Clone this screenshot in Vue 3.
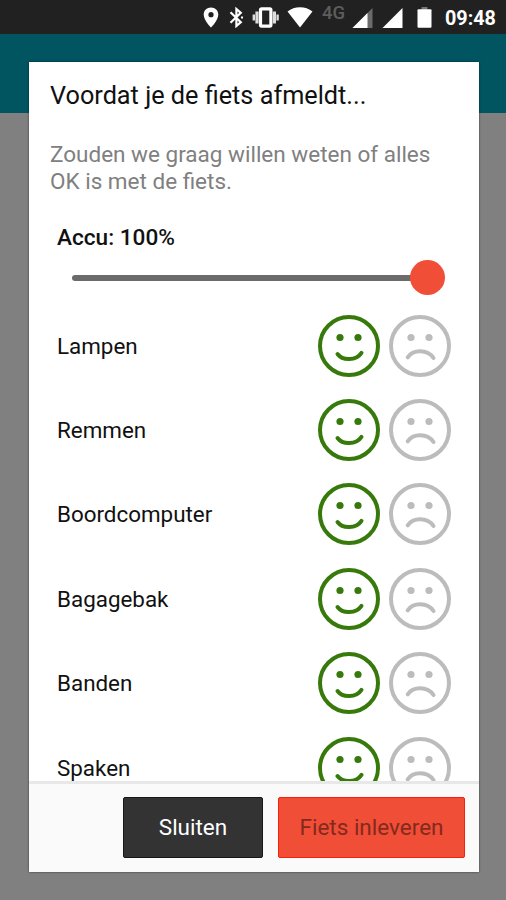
<template>
  <div class="screen">
    <div class="statusbar">
      <svg class="icon-pin" width="16" height="21" viewBox="0 0 16 21">
        <path fill="#fff" fill-rule="evenodd" d="M8 0.5C3.8 0.5 0.7 3.6 0.7 7.7C0.7 13 8 20.5 8 20.5S15.3 13 15.3 7.7C15.3 3.6 12.2 0.5 8 0.5ZM8 5.1A2.6 2.6 0 1 1 8 10.3A2.6 2.6 0 1 1 8 5.1Z" />
      </svg>
      <svg class="icon-bluetooth" width="15" height="21" viewBox="0 0 15 21">
        <path d="M1.5 5.3L11.8 15.2L7.4 19V2L11.8 5.8L1.5 15.7" fill="none" stroke="#fff" stroke-width="2.2" />
        <path d="M12 10.5H14" stroke="#fff" stroke-width="2" />
      </svg>
      <svg class="icon-vibrate" width="27" height="21" viewBox="0 0 27 21">
        <rect x="8.5" y="1.9" width="10.4" height="17.2" rx="1" fill="none" stroke="#fff" stroke-width="3.2" />
        <path d="M5 4.5V16.5M22.4 4.5V16.5" stroke="#ddd" stroke-width="3.2" />
        <path d="M1.8 7.5V13.5M25.6 7.5V13.5" stroke="#ddd" stroke-width="2.4" />
      </svg>
      <svg class="icon-wifi" width="26" height="21" viewBox="0 0 26 21">
        <path d="M0.5 4.5C4 1.7 8.3 0.2 13 0.2S22 1.7 25.5 4.5L13 20.5Z" fill="#fff" />
      </svg>
      <span class="network">4G</span>
      <svg class="icon-signal" width="21" height="20" viewBox="0 0 21 20">
        <path d="M20.5 0V20H0.5Z" fill="#6b6b6b" />
        <path d="M15.5 4.9V20H0.5Z" fill="#fff" />
      </svg>
      <svg class="icon-signal full" width="21" height="20" viewBox="0 0 21 20">
        <path d="M20.5 0V20H0.5Z" fill="#fff" />
      </svg>
      <svg class="icon-battery" width="15" height="21" viewBox="0 0 15 21">
        <rect x="4.5" y="0" width="6" height="3" fill="#777" />
        <rect x="0.5" y="2.3" width="14" height="18.4" rx="1" fill="#fff" />
      </svg>
      <span class="time">09:48</span>
    </div>
    <div class="toolbar"></div>

    <div class="overlay">
      <div class="dialog">
        <div class="dialog-body">
          <h1>Voordat je de fiets afmeldt...</h1>
          <p class="intro">Zouden we graag willen weten of alles OK is met de fiets.</p>
          <div class="accu">Accu: {{ accu }}%</div>
          <div class="slider">
            <div class="track" :style="{ width: accu + '%' }"></div>
            <div class="thumb"></div>
          </div>
          <div v-for="onderdeel in onderdelen" :key="onderdeel.naam" class="row">
            <span class="label">{{ onderdeel.naam }}</span>
            <svg
              class="face good"
              :class="{ active: onderdeel.ok }"
              viewBox="0 0 62 62"
              @click="onderdeel.ok = true"
            >
              <circle cx="31" cy="31" r="29" />
              <circle class="eye" cx="22" cy="22.5" r="3.6" />
              <circle class="eye" cx="40" cy="22.5" r="3.6" />
              <path d="M19.5 39C24.5 45.8 38 46 43.5 37.8" />
            </svg>
            <svg
              class="face bad"
              :class="{ active: !onderdeel.ok }"
              viewBox="0 0 62 62"
              @click="onderdeel.ok = false"
            >
              <circle cx="31" cy="31" r="29" />
              <circle class="eye" cx="22" cy="22.5" r="3.6" />
              <circle class="eye" cx="40" cy="22.5" r="3.6" />
              <path d="M18.7 42.3C24 34.2 38.5 34 44.5 43" />
            </svg>
          </div>
        </div>
        <div class="dialog-footer">
          <button class="btn btn-close">Sluiten</button>
          <button class="btn btn-submit">Fiets inleveren</button>
        </div>
      </div>
    </div>
  </div>
</template>

<script setup>
import { ref } from 'vue';

const accu = ref(100);

const onderdelen = ref([
  { naam: 'Lampen', ok: true },
  { naam: 'Remmen', ok: true },
  { naam: 'Boordcomputer', ok: true },
  { naam: 'Bagagebak', ok: true },
  { naam: 'Banden', ok: true },
  { naam: 'Spaken', ok: true }
]);
</script>

<style>
body {
    margin: 0;
    background: #808080;
}
</style>

<style scoped>
.screen {
    position: relative;
    width: 506px;
    height: 900px;
    overflow: hidden;
    background: #808080;
    font-family: Roboto, "Liberation Sans", sans-serif;
}

.statusbar {
    display: flex;
    align-items: flex-start;
    box-sizing: border-box;
    height: 34px;
    padding: 7px 0 0 203px;
    background: #212121;
}

.statusbar svg { flex-shrink: 0; }
.icon-bluetooth { margin-left: 10px; }
.icon-vibrate { margin-left: 8px; }
.icon-wifi { margin-left: 8px; }

.network {
    width: 26px;
    margin: -4px 0 0 9px;
    color: #5d5d5d;
    font-size: 18.5px;
    font-weight: 500;
    line-height: 21px;
}

.icon-signal { margin: 1px 0 0 4px; }
.icon-signal.full { margin-left: 9px; }
.icon-battery { margin-left: 14px; }

.time {
    margin-left: 13px;
    color: #fff;
    font-size: 19.8px;
    font-weight: 700;
    line-height: 23px;
}

.toolbar {
    height: 79px;
    background: #005561;
}

.overlay {
    position: absolute;
    inset: 34px 0 0;
    display: flex;
    justify-content: center;
    align-items: flex-start;
    padding: 28px 27px 0 29px;
}

.dialog {
    display: flex;
    flex-direction: column;
    width: 450px;
    height: 810px;
    background: #fff;
    box-shadow: 0 0 2px rgba(0, 0, 0, 0.6);
}

.dialog-body {
    flex: 1;
    min-height: 0;
    overflow: hidden;
}

h1 {
    margin: 19px 21px 0;
    color: #111;
    font-size: 25.25px;
    font-weight: 400;
    line-height: 30px;
}

.intro {
    margin: 30px 21px 0;
    color: #808080;
    font-size: 22.5px;
    line-height: 27px;
}

.accu {
    margin: 29px 28px 0;
    color: #111;
    font-size: 22.6px;
    font-weight: 500;
    line-height: 28px;
}

.slider {
    display: flex;
    align-items: center;
    width: 373px;
    height: 36px;
    margin: 7.5px 0 0 43px;
}

.track {
    height: 6px;
    border-radius: 3px;
    background: #6b6b6b;
}

.thumb {
    flex-shrink: 0;
    width: 35px;
    height: 35px;
    margin-left: -18px;
    border-radius: 50%;
    background: #f04e37;
}

.row {
    display: flex;
    align-items: center;
    height: 84.4px;
    padding: 0 28.5px 0 28px;
}

.slider + .row { margin-top: 8px; }

.label {
    flex: 1;
    color: #111;
    font-size: 22.4px;
}

.face {
    width: 62px;
    height: 62px;
    fill: none;
    stroke: #bcbcbc;
    stroke-width: 4;
    cursor: pointer;
}

.face path { stroke-linecap: round; }
.face + .face { margin-left: 8.5px; }
.face .eye { fill: #bcbcbc; stroke: none; }
.face.good.active { stroke: #377a0b; }
.face.good.active .eye { fill: #377a0b; }
.face.bad.active { stroke: #f04e37; }
.face.bad.active .eye { fill: #f04e37; }

.dialog-footer {
    display: flex;
    justify-content: flex-end;
    gap: 15px;
    box-sizing: border-box;
    height: 91px;
    padding: 13px 14px 14px;
    border-top: 3px solid #e8e8e8;
    background: #fafafa;
}

.btn {
    height: 61px;
    padding: 0 0 1px;
    border: 1px solid;
    border-radius: 2px;
    font-family: inherit;
    font-size: 22.5px;
    cursor: pointer;
}

.btn-close {
    width: 140px;
    border-color: #171717;
    background: #333;
    color: #fff;
}

.btn-submit {
    width: 187px;
    border-color: #f5200c;
    background: #f04e37;
    color: #84291c;
}
</style>
